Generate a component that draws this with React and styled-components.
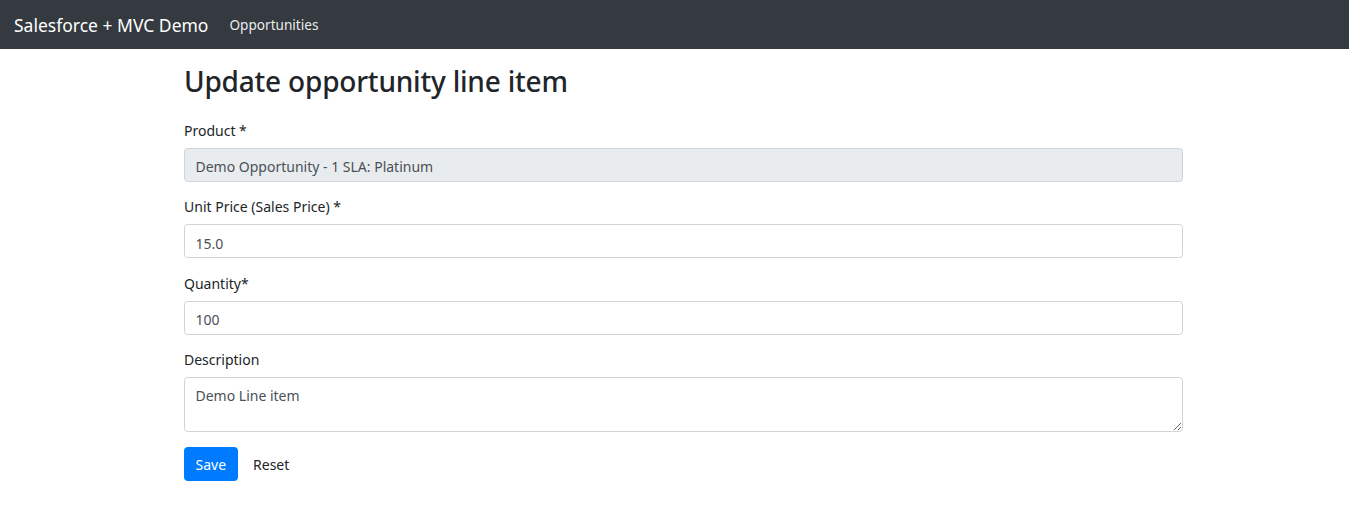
import React from 'react'
import styled, { createGlobalStyle } from 'styled-components'

const GlobalStyle = createGlobalStyle`
  body {
    margin: 0;
    font-family: "Segoe UI", "Noto Sans", "Open Sans", sans-serif;
    font-size: 14px;
    line-height: 1.5;
    color: #212529;
    background: #fff;
  }
  * { box-sizing: border-box; }
`

const Navbar = styled.nav`
  display: flex;
  align-items: center;
  height: 49px;
  padding: 2px 14px 0;
  background-color: #343a40;
`

const Brand = styled.a`
  font-size: 17.5px;
  color: #fff;
  margin-right: 14px;
  text-decoration: none;
  white-space: nowrap;
`

const NavLink = styled.a`
  padding: 0 7px;
  font-size: 13.6px;
  color: rgba(255, 255, 255, 0.92);
  text-decoration: none;
`

const Main = styled.main`
  padding: 16px 166px 0 184px;
`

const Title = styled.h2`
  margin: 0 0 21px;
  font-size: 28px;
  font-weight: 500;
  line-height: 1.2;
  letter-spacing: -0.2px;
`

const Field = styled.div`
  margin-bottom: 14.5px;
`

const Label = styled.label`
  display: block;
  margin-bottom: 7px;
`

const Input = styled.input`
  display: block;
  width: 100%;
  height: 34px;
  padding: 7px 10.5px 3px;
  font: inherit;
  color: #495057;
  background-color: ${(p) => (p.readOnly ? '#e9ecef' : '#fff')};
  border: 1px solid #ced4da;
  border-radius: 3.5px;
  outline: none;
`

const TextArea = styled.textarea`
  display: block;
  width: 100%;
  height: 55px;
  padding: 7px 10.5px 4px;
  font: inherit;
  color: #495057;
  border: 1px solid #ced4da;
  border-radius: 3.5px;
  outline: none;
`

const Actions = styled.div`
  display: flex;
  gap: 4px;
`

const Button = styled.button`
  height: 34px;
  padding: 1px 10.5px 0;
  font: inherit;
  border: 1px solid ${(p) => (p.primary ? '#007bff' : 'transparent')};
  border-radius: 3.5px;
  background-color: ${(p) => (p.primary ? '#007bff' : 'transparent')};
  color: ${(p) => (p.primary ? '#fff' : '#212529')};
  cursor: pointer;
`

const App = () => {
  return (
    <>
      <GlobalStyle />
      <Navbar>
        <Brand href="#">Salesforce + MVC Demo</Brand>
        <NavLink href="#">Opportunities</NavLink>
      </Navbar>
      <Main>
        <Title>Update opportunity line item</Title>
        <form onSubmit={(e) => e.preventDefault()}>
          <Field>
            <Label>Product *</Label>
            <Input readOnly defaultValue="Demo Opportunity - 1 SLA: Platinum" />
          </Field>
          <Field>
            <Label>Unit Price (Sales Price) *</Label>
            <Input defaultValue="15.0" />
          </Field>
          <Field>
            <Label>Quantity*</Label>
            <Input defaultValue="100" />
          </Field>
          <Field>
            <Label>Description</Label>
            <TextArea defaultValue="Demo Line item" />
          </Field>
          <Actions>
            <Button primary type="submit">Save</Button>
            <Button type="reset">Reset</Button>
          </Actions>
        </form>
      </Main>
    </>
  )
}

export default App
